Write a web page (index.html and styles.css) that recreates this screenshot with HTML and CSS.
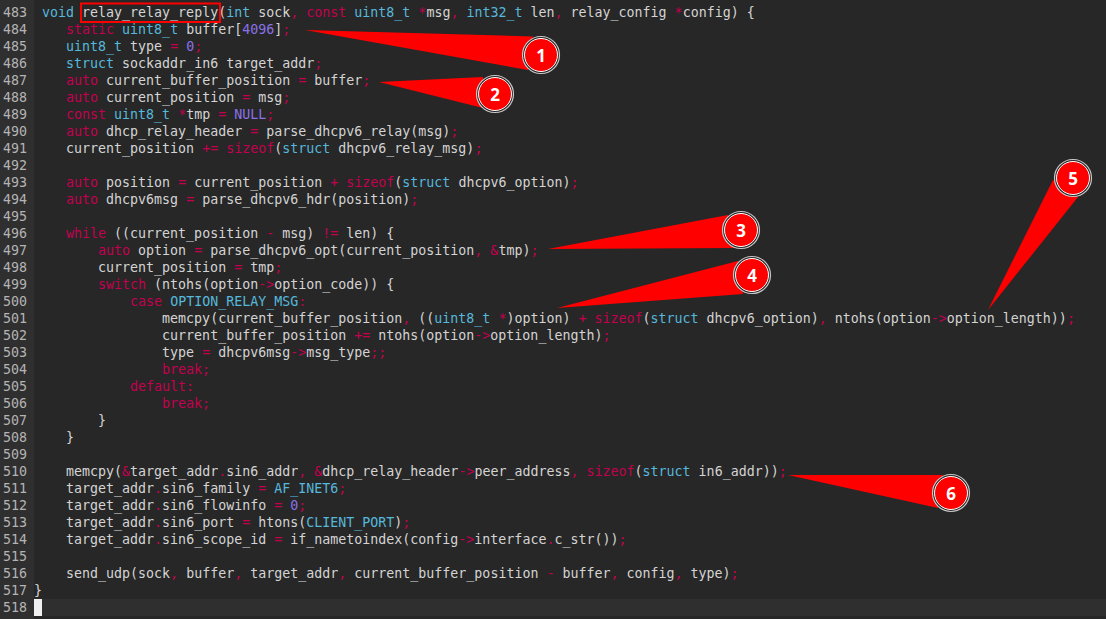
FILE: index.html
```html
<!DOCTYPE html>
<html lang="en">
<head>
<meta charset="utf-8">
<title>relay_relay_reply</title>
<link rel="stylesheet" href="styles.css">
</head>
<body>
<main class="editor">
<div class="gutter"><div>483</div><div>484</div><div>485</div><div>486</div><div>487</div><div>488</div><div>489</div><div>490</div><div>491</div><div>492</div><div>493</div><div>494</div><div>495</div><div>496</div><div>497</div><div>498</div><div>499</div><div>500</div><div>501</div><div>502</div><div>503</div><div>504</div><div>505</div><div>506</div><div>507</div><div>508</div><div>509</div><div>510</div><div>511</div><div>512</div><div>513</div><div>514</div><div>515</div><div>516</div><div>517</div><div>518</div></div>
<div class="code">
<div class="line"> <b class="t">void</b> relay_relay_reply(<b class="t">int</b> sock<b class="k">,</b> <b class="k">const</b> <b class="t">uint8_t</b> <b class="k">*</b>msg<b class="k">,</b> <b class="t">int32_t</b> len<b class="k">,</b> relay_config <b class="k">*</b>config) {</div>
<div class="line">	<b class="k">static</b> <b class="t">uint8_t</b> buffer[<b class="n">4096</b>]<b class="k">;</b></div>
<div class="line">	<b class="t">uint8_t</b> type <b class="k">=</b> <b class="n">0</b><b class="k">;</b></div>
<div class="line">	<b class="t">struct</b> sockaddr_in6 target_addr<b class="k">;</b></div>
<div class="line">	<b class="k">auto</b> current_buffer_position <b class="k">=</b> buffer<b class="k">;</b></div>
<div class="line">	<b class="k">auto</b> current_position <b class="k">=</b> msg<b class="k">;</b></div>
<div class="line">	<b class="k">const</b> <b class="t">uint8_t</b> <b class="k">*</b>tmp <b class="k">=</b> <b class="n">NULL</b><b class="k">;</b></div>
<div class="line">	<b class="k">auto</b> dhcp_relay_header <b class="k">=</b> parse_dhcpv6_relay(msg)<b class="k">;</b></div>
<div class="line">	current_position <b class="k">+=</b> <b class="k">sizeof</b>(<b class="t">struct</b> dhcpv6_relay_msg)<b class="k">;</b></div>
<div class="line"> </div>
<div class="line">	<b class="k">auto</b> position <b class="k">=</b> current_position <b class="k">+</b> <b class="k">sizeof</b>(<b class="t">struct</b> dhcpv6_option)<b class="k">;</b></div>
<div class="line">	<b class="k">auto</b> dhcpv6msg <b class="k">=</b> parse_dhcpv6_hdr(position)<b class="k">;</b></div>
<div class="line"> </div>
<div class="line">	<b class="k">while</b> ((current_position <b class="k">-</b> msg) <b class="k">!=</b> len) {</div>
<div class="line">		<b class="k">auto</b> option <b class="k">=</b> parse_dhcpv6_opt(current_position<b class="k">,</b> <b class="k">&amp;</b>tmp)<b class="k">;</b></div>
<div class="line">		current_position <b class="k">=</b> tmp<b class="k">;</b></div>
<div class="line">		<b class="k">switch</b> (ntohs(option<b class="k">-&gt;</b>option_code)) {</div>
<div class="line">			<b class="k">case</b> <b class="t">OPTION_RELAY_MSG</b><b class="k">:</b></div>
<div class="line">				memcpy(current_buffer_position<b class="k">,</b> ((<b class="t">uint8_t</b> <b class="k">*</b>)option) <b class="k">+</b> <b class="k">sizeof</b>(<b class="t">struct</b> dhcpv6_option)<b class="k">,</b> ntohs(option<b class="k">-&gt;</b>option_length))<b class="k">;</b></div>
<div class="line">				current_buffer_position <b class="k">+=</b> ntohs(option<b class="k">-&gt;</b>option_length)<b class="k">;</b></div>
<div class="line">				type <b class="k">=</b> dhcpv6msg<b class="k">-&gt;</b>msg_type<b class="k">;;</b></div>
<div class="line">				<b class="k">break;</b></div>
<div class="line">			<b class="k">default:</b></div>
<div class="line">				<b class="k">break;</b></div>
<div class="line">		}</div>
<div class="line">	}</div>
<div class="line"> </div>
<div class="line">	memcpy(<b class="k">&amp;</b>target_addr<b class="k">.</b>sin6_addr<b class="k">,</b> <b class="k">&amp;</b>dhcp_relay_header<b class="k">-&gt;</b>peer_address<b class="k">,</b> <b class="k">sizeof</b>(<b class="t">struct</b> in6_addr))<b class="k">;</b></div>
<div class="line">	target_addr<b class="k">.</b>sin6_family <b class="k">=</b> <b class="t">AF_INET6</b><b class="k">;</b></div>
<div class="line">	target_addr<b class="k">.</b>sin6_flowinfo <b class="k">=</b> <b class="n">0</b><b class="k">;</b></div>
<div class="line">	target_addr<b class="k">.</b>sin6_port <b class="k">=</b> htons(<b class="t">CLIENT_PORT</b>)<b class="k">;</b></div>
<div class="line">	target_addr<b class="k">.</b>sin6_scope_id <b class="k">=</b> if_nametoindex(config<b class="k">-&gt;</b>interface<b class="k">.</b>c_str())<b class="k">;</b></div>
<div class="line"> </div>
<div class="line">	send_udp(sock<b class="k">,</b> buffer<b class="k">,</b> target_addr<b class="k">,</b> current_buffer_position <b class="k">-</b> buffer<b class="k">,</b> config<b class="k">,</b> type)<b class="k">;</b></div>
<div class="line">}</div>
<div class="line current"><span class="cursor"></span></div>
</div>
<svg class="notes" width="1106" height="619" viewBox="0 0 1106 619" aria-label="Annotations">
<rect class="box" x="81" y="3.5" width="139" height="18.5"/>
<polygon class="wedge" points="305,30 533,36.5 528,70"/>
<polygon class="wedge" points="379,82 483,77 483,108"/>
<polygon class="wedge" points="548,249 728,215 735,248"/>
<polygon class="wedge" points="557,308 738,261 743,294"/>
<polygon class="wedge" points="988,310 1053,180 1078,197"/>
<polygon class="wedge" points="788,475 943,475 938,508"/>
<g class="badge"><circle class="ring" cx="541" cy="55" r="18.5"/><circle class="disc" cx="541" cy="55" r="16.5"/><text x="541" y="61.5">1</text></g>
<g class="badge"><circle class="ring" cx="495" cy="94" r="18.5"/><circle class="disc" cx="495" cy="94" r="16.5"/><text x="495" y="100.5">2</text></g>
<g class="badge"><circle class="ring" cx="741" cy="230" r="18.5"/><circle class="disc" cx="741" cy="230" r="16.5"/><text x="741" y="236.5">3</text></g>
<g class="badge"><circle class="ring" cx="752" cy="275" r="18.5"/><circle class="disc" cx="752" cy="275" r="16.5"/><text x="752" y="281.5">4</text></g>
<g class="badge"><circle class="ring" cx="1073" cy="178" r="18.5"/><circle class="disc" cx="1073" cy="178" r="16.5"/><text x="1073" y="184.5">5</text></g>
<g class="badge"><circle class="ring" cx="951" cy="493" r="18.5"/><circle class="disc" cx="951" cy="493" r="16.5"/><text x="951" y="499.5">6</text></g>
</svg>
</main>
</body>
</html>
```
FILE: styles.css
```css
* { box-sizing: border-box; }
html, body { margin: 0; height: 100%; overflow: hidden; background: #272727; }
.editor {
  position: relative;
  display: flex;
  width: 1106px;
  height: 619px;
  overflow: hidden;
  font-family: "DejaVu Sans Mono", monospace;
  font-size: 13.31px;
  line-height: 17px;
  color: #d4d4d4;
}
.gutter {
  flex: 0 0 34px;
  padding: 4px 0 0 3px;
  background: #2f2f2f;
  color: #b4b4b4;
}
.code {
  flex: 1;
  padding-top: 4px;
}
.line { height: 17px; white-space: pre; tab-size: 4; }
.line b { font-weight: normal; }
.k { color: #c4004f; }
.t { color: #56b8dc; }
.n { color: #8a72e8; }
.current { background: #2f2f2f; }
.cursor { display: block; width: 8px; height: 17px; background: #f0f0f0; }
.notes { position: absolute; left: 0; top: 0; }
.box { fill: none; stroke: #f00; stroke-width: 2; }
.wedge { fill: #f00; }
.ring { fill: #272727; stroke: #c8c8c8; stroke-width: 1.2; }
.disc { fill: #f00; stroke: #fff; stroke-width: 1; }
.badge text {
  fill: #fff;
  font-family: "Noto Sans", sans-serif;
  font-size: 17px;
  font-weight: 700;
  text-anchor: middle;
}
```
